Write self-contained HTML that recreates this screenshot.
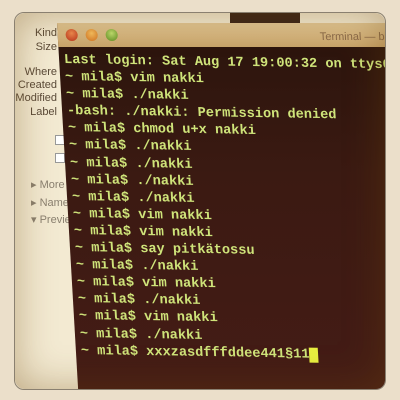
<!DOCTYPE html>
<html><head><style>
html,body{margin:0;padding:0;}
body{width:400px;height:400px;background:#ebdfca;position:relative;overflow:hidden;font-family:"Liberation Sans",sans-serif;}
#photo{position:absolute;left:14px;top:12px;width:372px;height:378px;border-radius:10px;overflow:hidden;background:#f3ead2;border:1px solid #8a8070;box-sizing:border-box;}
.lbl{position:absolute;right:328px;font-size:11px;color:#5a4a38;text-align:right;}
#term{position:absolute;left:42px;top:10px;width:340px;height:380px;background:linear-gradient(180deg,#2a140c 0%,#3b1a12 40%,#451c16 100%);transform:skewX(3.3deg);transform-origin:0 0;}
#title{position:absolute;left:0;top:0;width:100%;height:24px;background:linear-gradient(180deg,#e2c896,#c9a46a);}
.dot{position:absolute;top:6px;width:12px;height:12px;border-radius:50%;}
#txt{position:absolute;left:5px;top:29px;font-family:"Liberation Mono",monospace;font-weight:bold;font-size:13.6px;line-height:17.1px;color:#cfe47a;white-space:pre;transform:skewY(0.9deg);transform-origin:0 0;}
#vig{position:absolute;inset:0;border-radius:10px;box-shadow:inset 0 0 40px rgba(110,70,10,0.4);pointer-events:none;}
.cur{background:#e8f040;color:#e8f040;}
</style></head><body>
<div id="photo">
  <div style="position:absolute;left:215px;top:0;width:70px;height:14px;background:#3a2418"></div>
  <div class="lbl" style="top:14px">Kind</div>
  <div class="lbl" style="top:28px">Size</div>
  <div class="lbl" style="top:53px">Where</div>
  <div class="lbl" style="top:66px">Created</div>
  <div class="lbl" style="top:79px">Modified</div>
  <div class="lbl" style="top:93px">Label</div>
  <div style="position:absolute;left:40px;top:122px;width:8px;height:8px;border:1px solid #999;background:#fff"></div>
  <div style="position:absolute;left:40px;top:140px;width:8px;height:8px;border:1px solid #999;background:#fff"></div>
  <div class="lbl" style="top:165px;right:auto;left:16px;color:#8a8070;">▸ More In</div>
  <div class="lbl" style="top:183px;right:auto;left:16px;color:#8a8070;">▸ Name &amp;</div>
  <div class="lbl" style="top:200px;right:auto;left:16px;color:#8a8070;">▾ Preview</div>
  <div id="term">
    <div id="title">
      <div class="dot" style="left:8px;background:radial-gradient(circle at 50% 35%,#f08a50,#b8301a)"></div>
      <div class="dot" style="left:28px;background:radial-gradient(circle at 50% 35%,#f8c060,#d07020)"></div>
      <div class="dot" style="left:48px;background:radial-gradient(circle at 50% 35%,#c0e070,#5a8a20)"></div>
      <div style="position:absolute;left:262px;top:8px;font-size:11px;color:#8a6a4a;white-space:nowrap">Terminal — ba</div>
    </div>
    <div id="txt">Last login: Sat Aug 17 19:00:32 on ttys000
~ mila$ vim nakki
~ mila$ ./nakki
-bash: ./nakki: Permission denied
~ mila$ chmod u+x nakki
~ mila$ ./nakki
~ mila$ ./nakki
~ mila$ ./nakki
~ mila$ ./nakki
~ mila$ vim nakki
~ mila$ vim nakki
~ mila$ say pitkätossu
~ mila$ ./nakki
~ mila$ vim nakki
~ mila$ ./nakki
~ mila$ vim nakki
~ mila$ ./nakki
~ mila$ xxxzasdfffddee441§11<span class="cur">_</span></div>
  </div>
  <div id="vig"></div>
</div>
</body></html>
